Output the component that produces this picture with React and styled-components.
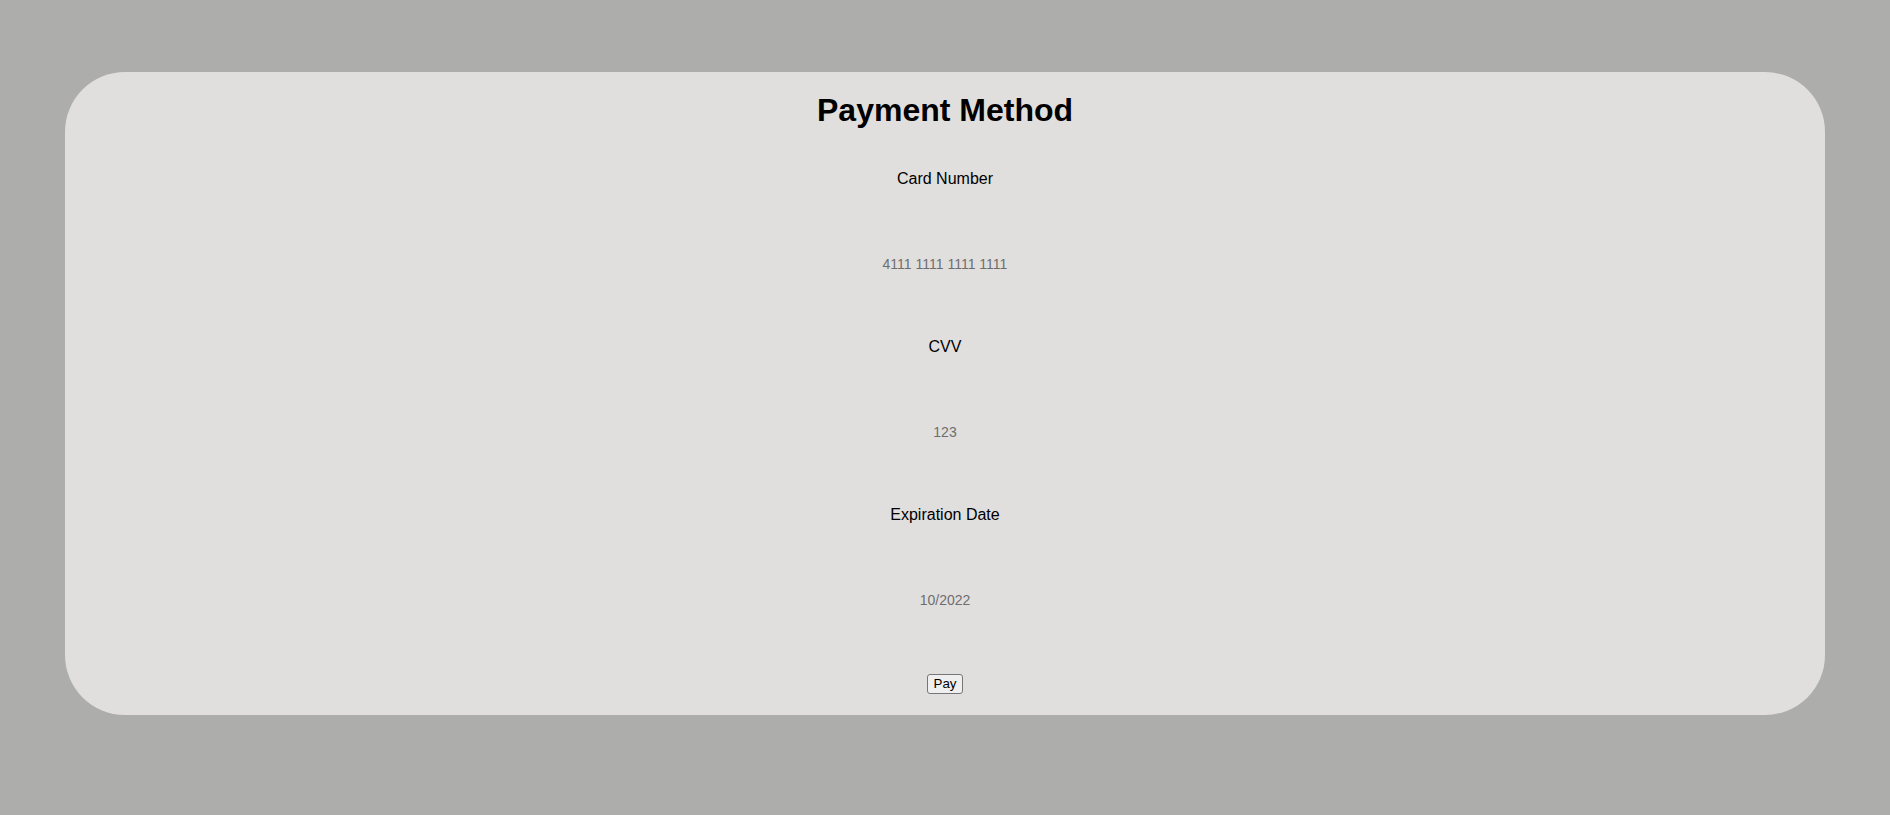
import React from 'react';
import styled, { createGlobalStyle } from 'styled-components';

const GlobalStyle = createGlobalStyle`
  html, body {
    margin: 0;
    padding: 0;
    background: #adadab;
    font-family: "Liberation Sans", Arial, Helvetica, sans-serif;
  }
`;

const Page = styled.div`
  min-height: 815px;
  box-sizing: border-box;
  padding: 72px 65px 100px 65px;
`;

const Card = styled.div`
  background: #e0dfdd;
  border-radius: 60px;
  display: flex;
  flex-direction: column;
  align-items: center;
  padding: 20px 0 21px 0;
`;

const Title = styled.h1`
  margin: 0;
  font-size: 32px;
  line-height: 37px;
  font-weight: bold;
  color: #000;
`;

const Form = styled.form`
  margin-top: 41px;
  display: flex;
  flex-direction: column;
  align-items: center;
  gap: 66px;
`;

const Field = styled.div`
  display: flex;
  flex-direction: column;
  align-items: center;
  gap: 68px;
`;

const Label = styled.label`
  font-size: 16px;
  line-height: 18px;
  color: #000;
`;

const Input = styled.input`
  width: 200px;
  height: 16px;
  padding: 0;
  border: none;
  outline: none;
  background: transparent;
  text-align: center;
  font-family: inherit;
  font-size: 14px;
  line-height: 16px;
  color: #000;
  &::placeholder {
    color: #6e6e6e;
  }
`;

const Button = styled.button`
  height: 20px;
  padding: 0 6px;
  border: 1px solid #767676;
  border-radius: 3px;
  background: #efefef;
  font-family: inherit;
  font-size: 13.33px;
  line-height: 18px;
  color: #000;
`;

const fields = [
  { id: 'card', label: 'Card Number', placeholder: '4111 1111 1111 1111' },
  { id: 'cvv', label: 'CVV', placeholder: '123' },
  { id: 'exp', label: 'Expiration Date', placeholder: '10/2022' },
];

const App = () => (
  <Page>
    <GlobalStyle />
    <Card>
      <Title>Payment Method</Title>
      <Form onSubmit={e => e.preventDefault()}>
        {fields.map(f => (
          <Field key={f.id}>
            <Label htmlFor={f.id}>{f.label}</Label>
            <Input id={f.id} type="text" placeholder={f.placeholder} />
          </Field>
        ))}
        <Button type="submit">Pay</Button>
      </Form>
    </Card>
  </Page>
);

export default App;
